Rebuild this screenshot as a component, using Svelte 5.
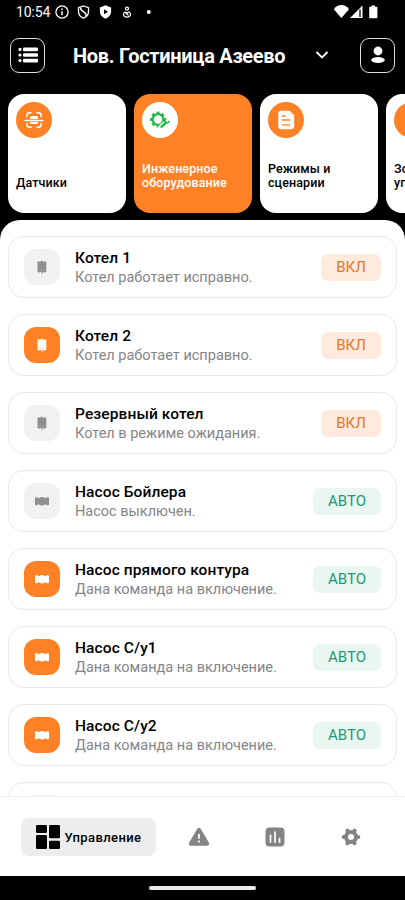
<script lang="ts">
	type Device = {
		name: string;
		status: string;
		kind: 'boiler' | 'pump';
		active: boolean;
		mode: 'ВКЛ' | 'АВТО';
	};

	const categories = [
		{ title: ['Датчики'], icon: 'scan' },
		{ title: ['Инженерное', 'оборудование'], icon: 'engineering' },
		{ title: ['Режимы и', 'сценарии'], icon: 'document' },
		{ title: ['Зоны', 'управления'], icon: 'zones' }
	];

	const devices: Device[] = [
		{ name: 'Котел 1', status: 'Котел работает исправно.', kind: 'boiler', active: false, mode: 'ВКЛ' },
		{ name: 'Котел 2', status: 'Котел работает исправно.', kind: 'boiler', active: true, mode: 'ВКЛ' },
		{ name: 'Резервный котел', status: 'Котел в режиме ожидания.', kind: 'boiler', active: false, mode: 'ВКЛ' },
		{ name: 'Насос Бойлера', status: 'Насос выключен.', kind: 'pump', active: false, mode: 'АВТО' },
		{ name: 'Насос прямого контура', status: 'Дана команда на включение.', kind: 'pump', active: true, mode: 'АВТО' },
		{ name: 'Насос С/у1', status: 'Дана команда на включение.', kind: 'pump', active: true, mode: 'АВТО' },
		{ name: 'Насос С/у2', status: 'Дана команда на включение.', kind: 'pump', active: true, mode: 'АВТО' }
	];

	const teeth = [0, 45, 90, 135, 180, 225, 270, 315];
	const bigTeeth = [0, 60, 120, 180, 240, 300];

	let selected = $state(1);
</script>

<div class="screen">
	<div class="status">
		<span class="time">10:54</span>
		<svg class="left-icons" width="100" height="16" viewBox="0 0 100 16" fill="none" stroke="#fff">
			<circle cx="7" cy="8" r="6.1" stroke-width="1.3" />
			<path d="M7 7.2v4M7 4.6v1.4" stroke-width="1.5" />
			<path d="M28.5 2l5 1.6v4c0 3.2-2 5.5-5 6.6c-3-1.1-5-3.4-5-6.6v-4z" stroke-width="1.3" />
			<path d="M25.500 3.500c0 3 2 3.600 3.600 4.600s2.400 2.300 1.900 4.300" stroke-width="1.4" />
			<path d="M50.5 1.3l5.600 2.100v4.400c0 3.200-2.300 5.700-5.600 7c-3.300-1.300-5.600-3.800-5.600-7v-4.400z" fill="#fff" stroke="none" />
			<path d="M49 5.300l4 2.500l-4 2.500z" fill="#000" stroke="none" />
			<circle cx="72" cy="4.6" r="1.5" stroke-width="1.2" />
			<path d="M68.800 9c1.200-1.500 2.400-1 3.200.2c.8-1.200 2-1.700 3.200-.2c1.400 2-1 4.200-3.200 4.200s-4.600-2.200-3.200-4.200zM70.300 8.700l3.200 2.600" stroke-width="1.2" />
			<circle cx="93.8" cy="8" r="2" fill="#fff" stroke="none" />
		</svg>
		<svg class="right-icons" width="46" height="16" viewBox="0 0 46 16" fill="#fff">
			<path d="M.8 5.300C5-.3 11.800-.3 16 5.300L8.400 14z" />
			<path d="M29.500 1.500v12.500H17z" />
			<path d="M27 5.500v7.500" stroke="#000" stroke-width="1.3" />
			<path d="M38.500 1.500h3.600v1.300h1.500q.8 0 .8.8v9.800q0 .8-.8.8h-6.600q-.8 0-.8-.8V3.600q0-.8.800-.8h1.500z" />
		</svg>
	</div>

	<header>
		<button class="square" aria-label="Меню">
			<svg width="22" height="18" viewBox="0 0 22 18" fill="#fff">
				<circle cx="3" cy="3.4" r="1.6" />
				<circle cx="3" cy="9" r="1.6" />
				<circle cx="3" cy="14.6" r="1.6" />
				<rect x="6" y="1.6" width="15" height="3.6" rx="1" />
				<rect x="6" y="7.2" width="15" height="3.6" rx="1" />
				<rect x="6" y="12.8" width="15" height="3.6" rx="1" />
			</svg>
		</button>
		<h1>Нов. Гостиница Азеево</h1>
		<svg class="chevron" width="14" height="10" viewBox="0 0 14 10" fill="none" stroke="#fff" stroke-width="1.8">
			<path d="M1.500 2l5.500 5.500L12.500 2" />
		</svg>
		<button class="square" aria-label="Профиль">
			<svg width="16" height="18" viewBox="0 0 16 18" fill="#fff">
				<circle cx="8" cy="5" r="4.4" />
				<ellipse cx="8" cy="14" rx="6.8" ry="3" />
			</svg>
		</button>
	</header>

	<div class="categories">
		{#each categories as category, i}
			<button class="category" class:selected={selected === i} onclick={() => (selected = i)}>
				<span class="round">
					{#if category.icon === 'scan'}
						<svg width="20" height="18" viewBox="0 0 20 18" fill="none" stroke="#fff" stroke-width="1.5" stroke-linecap="round">
							<path d="M3 5.500V4.200q0-2.500 2.500-2.500H7M13 1.700h1.500q2.500 0 2.500 2.500v1.300M3 12.500v1.300q0 2.500 2.500 2.500H7M13 16.300h1.500q2.500 0 2.500-2.500v-1.300" />
							<path d="M1 9.500h18" />
							<path d="M6 8V6.500q0-1.500 1.500-1.500h5q1.500 0 1.500 1.500V8zM6 11V11.500q0 1.500 1.500 1.500h5q1.500 0 1.500-1.500V11z" fill="#fff" stroke="none" />
						</svg>
					{:else if category.icon === 'engineering'}
						<svg width="20" height="18" viewBox="0 0 20 18" fill="none" stroke="#2bb84b">
							<circle cx="8" cy="8.5" r="5.3" stroke-width="2.2" />
							{#each teeth as angle}
								<path d="M8 .6v2.600" stroke-width="3" transform="rotate({angle} 8 8.5)" />
							{/each}
							<path d="M9.500 17.500l7-6.500" stroke="#fff" stroke-width="5" />
							<path d="M11.600 15.600l4.400-4" stroke-width="2.6" stroke-linecap="round" />
							<path d="M19 9.800a2.300 2.300 0 1 1-2.500-2.300" stroke-width="1.5" />
						</svg>
					{:else if category.icon === 'document'}
						<svg width="18" height="20" viewBox="0 0 18 20">
							<path d="M4.500.7h8.200l4.500 4.500v10.800q0 3.300-3.300 3.300H4.500q-3.300 0-3.300-3.300V4q0-3.300 3.300-3.300z" fill="#fff" />
							<path d="M4.800 6h4M4.800 10h8.400M4.800 14.800h8.400" stroke="#ff8126" stroke-width="1.3" />
							<path d="M12.700 .7v2q0 2.500 2.500 2.500h2z" fill="#ffe4d2" />
						</svg>
					{/if}
				</span>
				<span class="label">
					{#each category.title as line}
						<span>{line}</span>
					{/each}
				</span>
			</button>
		{/each}
	</div>

	<main>
		{#each devices as device}
			<div class="device">
				<div class="tile" class:active={device.active}>
					{#if device.kind === 'boiler'}
						<svg width="12" height="16" viewBox="0 0 12 16" fill="currentColor">
							<path d="M1.500 2.500h8.800v10.400H1.500zM5 1.500h1.200v1.500H5z" />
							<path d="M2.700 12.500h1v1.300h-1zM5.400 12.500h1.200v2.300H5.400zM8 12.500h1v1.300H8z" />
							<path d="M2.200 11.200h7.400" stroke={device.active ? '#ffb782' : '#b8b8ba'} stroke-width=".5" />
						</svg>
					{:else}
						<svg width="16" height="12" viewBox="0 0 16 12" fill="currentColor">
							<rect x="1" y="2.2" width="3" height="8" rx="1" />
							<rect x="12" y="2.2" width="3" height="8" rx="1" />
							<rect x="3" y="3.2" width="10" height="6" />
							<circle cx="8" cy="6.2" r="4.2" />
						</svg>
					{/if}
				</div>
				<div class="info">
					<h2>{device.name}</h2>
					<p>{device.status}</p>
				</div>
				<span class="mode" class:auto={device.mode === 'АВТО'}>{device.mode}</span>
			</div>
		{/each}
		<div class="device"><div class="tile"></div></div>
	</main>

	<nav>
		<button class="tab current">
			<svg width="24" height="24" viewBox="0 0 24 24" fill="#000">
				<rect x="0" y="0" width="11" height="8" rx="1.3" />
				<rect x="13" y="0" width="11" height="13.3" rx="1.3" />
				<rect x="0" y="10" width="11" height="14" rx="1.3" />
				<rect x="13" y="15.8" width="11" height="8.2" rx="1.3" />
			</svg>
			<span>Управление</span>
		</button>
		<button class="tab" aria-label="Аварии">
			<svg width="22" height="20" viewBox="0 0 22 20">
				<path d="M9 2.200q2-3 4 0l7.800 13.300q1.300 3-1.800 3.300H3q-3.100-.3-1.800-3.300z" fill="#848484" />
				<path d="M11 7v4.800M11 13.500v2" stroke="#fff" stroke-width="1.7" />
			</svg>
		</button>
		<button class="tab" aria-label="Графики">
			<svg width="20" height="20" viewBox="0 0 20 20">
				<rect x=".5" y=".5" width="19" height="19" rx="4" fill="#848484" />
				<path d="M5.500 7.500v8.300M10 4.500v11.300M14.500 10.800v5" stroke="#fff" stroke-width="1.7" />
			</svg>
		</button>
		<button class="tab" aria-label="Настройки">
			<svg width="20" height="20" viewBox="0 0 20 20" fill="none" stroke="#848484">
				<circle cx="10" cy="10" r="5" stroke-width="4" />
				{#each bigTeeth as angle}
					<path d="M10 2.700v1" stroke-width="4" stroke-linecap="round" transform="rotate({angle + 30} 10 10)" />
				{/each}
			</svg>
		</button>
	</nav>

	<div class="gesture"><span></span></div>
</div>

<style>
	:global(body) {
		margin: 0;
		background: #000;
	}

	.screen {
		width: 405px;
		height: 900px;
		overflow: hidden;
		display: flex;
		flex-direction: column;
		background: #000;
		font-family: Roboto, sans-serif;
	}

	button {
		border: 0;
		padding: 0;
		background: none;
		font: inherit;
		cursor: pointer;
	}

	svg {
		display: block;
		flex: none;
	}

	h1,
	h2,
	p {
		margin: 0;
		white-space: nowrap;
	}

	.status {
		box-sizing: border-box;
		height: 24px;
		flex: none;
		display: flex;
		align-items: center;
		padding: 0 26px 0 16px;
		color: #fff;
	}

	.time {
		width: 39px;
		font-size: 14px;
		line-height: 24px;
		letter-spacing: -0.1px;
	}

	.right-icons {
		margin-left: auto;
	}

	header {
		box-sizing: border-box;
		height: 70px;
		flex: none;
		display: flex;
		align-items: center;
		padding: 0 10px 8px;
	}

	.square {
		box-sizing: border-box;
		width: 35px;
		height: 35px;
		flex: none;
		border: 1px solid #dedede;
		border-radius: 9px;
		display: flex;
		align-items: center;
		justify-content: center;
	}

	h1 {
		width: 242px;
		margin-left: 28px;
		padding-top: 2px;
		color: #fff;
		font-size: 20px;
		line-height: 24px;
		font-weight: 700;
		letter-spacing: -0.3px;
	}

	header .square:last-child {
		margin-left: auto;
	}

	.categories {
		display: flex;
		flex: none;
		gap: 8px;
		padding-left: 8px;
		height: 126px;
		overflow: hidden;
	}

	.category {
		box-sizing: border-box;
		width: 118px;
		height: 119px;
		flex: none;
		border-radius: 16px;
		padding: 8px 8px 23px;
		background: #fff;
		color: #000;
		display: flex;
		flex-direction: column;
		justify-content: space-between;
		align-items: flex-start;
		text-align: left;
	}

	.round {
		width: 36px;
		height: 36px;
		border-radius: 50%;
		background: #ff8126;
		display: flex;
		align-items: center;
		justify-content: center;
	}

	.label {
		display: flex;
		flex-direction: column;
		font-size: 12.5px;
		line-height: 14px;
		font-weight: 500;
		letter-spacing: 0.1px;
	}

	.category.selected {
		background: #ff8126;
		color: #fff;

		.round {
			background: #fff;
		}
	}

	main {
		box-sizing: border-box;
		height: 576px;
		flex: none;
		overflow: hidden;
		display: flex;
		flex-direction: column;
		gap: 16px;
		padding: 16px 8px 0;
		border-radius: 20px 20px 0 0;
		background: #fff;
	}

	.device {
		box-sizing: border-box;
		height: 62px;
		flex: none;
		display: flex;
		align-items: center;
		padding: 0 15px;
		border: 1px solid #e9e9ea;
		border-radius: 16px;
	}

	.tile {
		width: 36px;
		height: 36px;
		flex: none;
		border-radius: 12px;
		background: #f1f1f3;
		color: #8f8f91;
		display: flex;
		align-items: center;
		justify-content: center;
	}

	.tile.active {
		background: #ff8126;
		color: #fff;
	}

	.info {
		flex: 1;
		margin-left: 15px;
		padding-top: 2px;
	}

	h2 {
		font-size: 15.5px;
		line-height: 19px;
		font-weight: 500;
		letter-spacing: 0.1px;
		color: #000;
	}

	p {
		font-size: 14.5px;
		line-height: 19px;
		letter-spacing: 0;
		color: #858589;
	}

	.mode {
		width: 60px;
		height: 27px;
		border-radius: 7px;
		background: #ffeadd;
		color: #e87722;
		font-size: 15px;
		line-height: 27px;
		text-align: center;
	}

	.mode.auto {
		width: 68px;
		background: #e9f7f0;
		color: #239779;
	}

	nav {
		box-sizing: border-box;
		height: 80px;
		flex: none;
		display: flex;
		align-items: center;
		padding: 1px 15px 0 21px;
		border-top: 1px solid #f0f0f0;
		background: #fff;
	}

	.tab {
		width: 76px;
		height: 38px;
		flex: none;
		display: flex;
		align-items: center;
		justify-content: center;
	}

	.tab.current {
		width: 135px;
		margin-right: 5px;
		gap: 5px;
		border-radius: 8px;
		background: #ededef;
		color: #000;
		font-size: 13px;
		font-weight: 500;
		letter-spacing: 0.4px;
	}

	.gesture {
		height: 24px;
		flex: none;
		display: flex;
		align-items: center;
		justify-content: center;
		background: #000;

		span {
			width: 107px;
			height: 4px;
			border-radius: 2px;
			background: #ebebeb;
		}
	}
</style>
